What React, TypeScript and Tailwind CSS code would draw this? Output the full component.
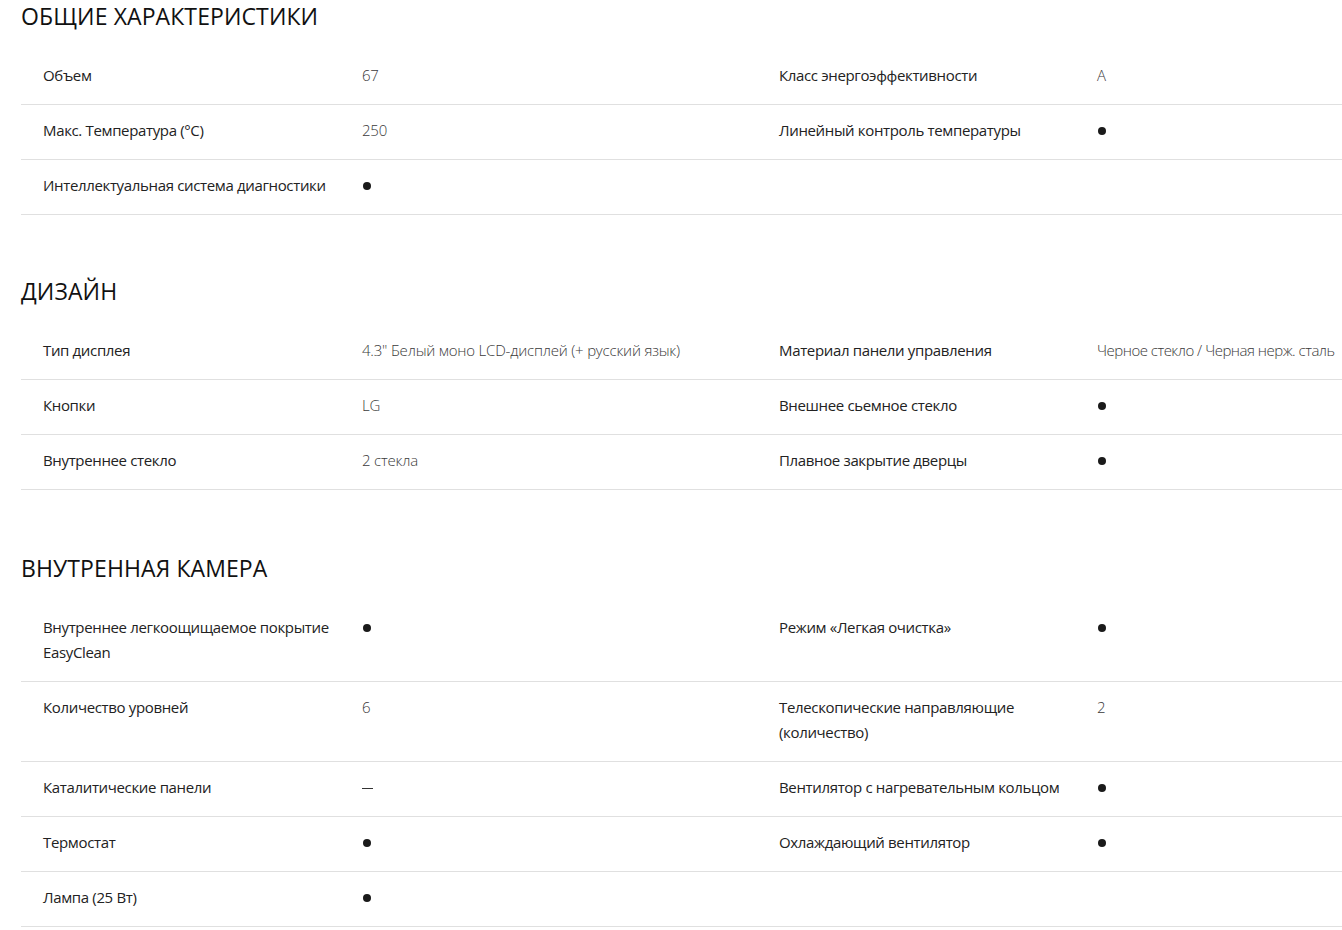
import React from "react";

type Row = [string, React.ReactNode, string?, React.ReactNode?];

const DOT = "●";
const DASH = "—";

const sections: { title: string; rows: Row[]; cls: string }[] = [
  {
    title: "ОБЩИЕ ХАРАКТЕРИСТИКИ",
    cls: "",
    rows: [
      ["Объем", "67", "Класс энергоэффективности", "A"],
      ["Макс. Температура (°C)", "250", "Линейный контроль температуры", DOT],
      ["Интеллектуальная система диагностики", DOT],
    ],
  },
  {
    title: "ДИЗАЙН",
    cls: "mt-[60px]",
    rows: [
      ["Тип дисплея", "4.3\" Белый моно LCD-дисплей (+ русский язык)", "Материал панели управления", "Черное стекло / Черная нерж. сталь"],
      ["Кнопки", "LG", "Внешнее сьемное стекло", DOT],
      ["Внутреннее стекло", "2 стекла", "Плавное закрытие дверцы", DOT],
    ],
  },
  {
    title: "ВНУТРЕННАЯ КАМЕРА",
    cls: "mt-[62px]",
    rows: [
      ["Внутреннее легкоощищаемое покрытие EasyClean", DOT, "Режим «Легкая очистка»", DOT],
      ["Количество уровней", "6", "Телескопические направляющие (количество)", "2"],
      ["Каталитические панели", DASH, "Вентилятор с нагревательным кольцом", DOT],
      ["Термостат", DOT, "Охлаждающий вентилятор", DOT],
      ["Лампа (25 Вт)", DOT],
    ],
  },
];

function Value({ v, tight }: { v: React.ReactNode; tight?: boolean }) {
  if (v === DOT) {
    return (
      <span className="inline-block ml-[1px] w-[8px] h-[8px] rounded-full bg-[#1a1a1a] align-middle -mt-[2px]" />
    );
  }
  if (v === DASH) {
    return <span className="inline-block w-[11px] h-[1px] bg-[#333] align-middle" />;
  }
  return (
    <span className={tight ? "text-[#3a3a3a] font-light tracking-[-0.5px]" : "text-[#3a3a3a] font-light tracking-[-0.2px]"}>
      {v}
    </span>
  );
}

export default function App() {
  return (
    <div
      className="w-full min-h-[930px] bg-white overflow-hidden"
      style={{ fontFamily: '"Open Sans", "Noto Sans", sans-serif' }}
    >
      <div className="ml-[21px] w-[1500px]">
        {sections.map((s) => (
          <section key={s.title} className={s.cls}>
            <h2 className="text-[23px] leading-[32px] text-[#111] font-normal mb-[18px] tracking-[0.1px]">
              {s.title}
            </h2>
            <div>
              {s.rows.map((r, j) => (
                <div
                  key={j}
                  className="grid grid-cols-[341px_395px_340px_1fr] border-b border-[#e0e0e0] pt-[13px] pb-[16px] text-[15px] leading-[25px]"
                >
                  <div className="pl-[22px] pr-[22px] text-[#222] font-medium tracking-[-0.35px]">{r[0]}</div>
                  <div className="pr-[20px]">
                    <Value v={r[1]} />
                  </div>
                  <div className="pl-[22px] pr-[22px] text-[#222] font-medium tracking-[-0.35px]">{r[2] ?? ""}</div>
                  <div className="whitespace-nowrap">
                    {r[3] !== undefined ? <Value v={r[3]} tight={typeof r[3] === "string" && r[3].length > 20} /> : null}
                  </div>
                </div>
              ))}
            </div>
          </section>
        ))}
      </div>
    </div>
  );
}
